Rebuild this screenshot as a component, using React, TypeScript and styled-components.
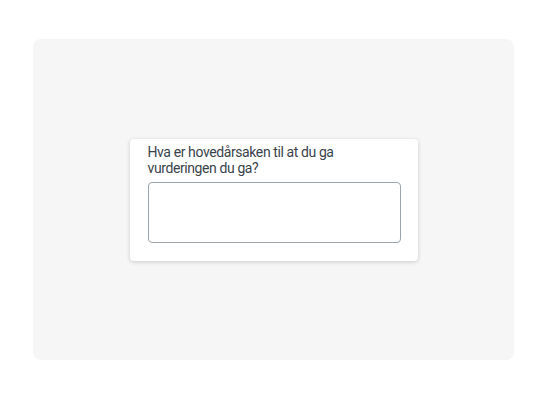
import styled, { createGlobalStyle } from 'styled-components';

const GlobalStyle = createGlobalStyle`
  html, body {
    margin: 0;
    padding: 0;
    background: #ffffff;
  }
  body {
    font-family: 'Roboto', 'Lato', sans-serif;
  }
`;

const Page = styled.div`
  width: 547px;
  height: 400px;
  box-sizing: border-box;
  padding: 39px 33px 40px;
  display: flex;
`;

const Panel = styled.div`
  flex: 1;
  background: #f6f6f6;
  border-radius: 8px;
  display: flex;
  align-items: center;
  justify-content: center;
`;

const Card = styled.div`
  width: 288px;
  height: 122px;
  box-sizing: border-box;
  background: #ffffff;
  border-radius: 4px;
  box-shadow: 0 1px 4px rgba(0, 0, 0, 0.18);
  padding: 5px 17px 18px 18px;
  display: flex;
  flex-direction: column;
  gap: 5px;
`;

const Question = styled.label`
  font-size: 14px;
  line-height: 16.5px;
  letter-spacing: -0.4px;
  color: #3a434b;
`;

const Answer = styled.textarea`
  display: block;
  width: 100%;
  height: 61px;
  box-sizing: border-box;
  border: 1px solid #9da5ab;
  border-radius: 4px;
  background: #ffffff;
  resize: none;
  outline: none;
  font-family: inherit;
  font-size: 14px;
  padding: 6px 8px;
`;

export default function App() {
  return (
    <>
      <GlobalStyle />
      <Page>
        <Panel>
          <Card>
            <Question htmlFor="answer">
              Hva er hovedårsaken til at du ga vurderingen du ga?
            </Question>
            <Answer id="answer" />
          </Card>
        </Panel>
      </Page>
    </>
  );
}
